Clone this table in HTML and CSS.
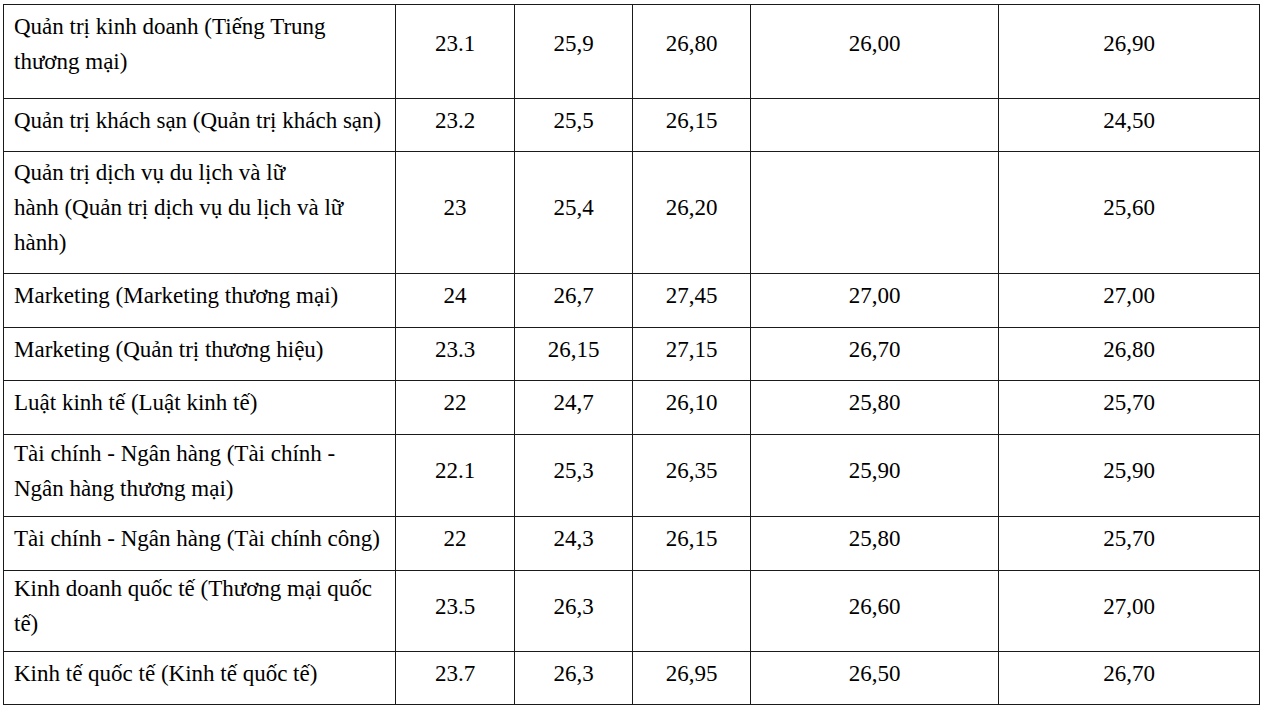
FILE: index.html
```html
<!DOCTYPE html>
<html lang="vi">
<head>
<meta charset="utf-8">
<title>Điểm chuẩn</title>
<link rel="stylesheet" href="styles.css">
</head>
<body>
<table class="scores">
  <colgroup>
    <col class="c-name">
    <col class="c-a">
    <col class="c-b">
    <col class="c-c">
    <col class="c-d">
    <col class="c-e">
  </colgroup>
  <tbody>
    <tr class="r-first">
      <td class="name">Quản trị kinh doanh (Tiếng Trung<br>thương mại)</td>
      <td>23.1</td><td>25,9</td><td class="gl">26,80</td><td class="gl">26,00</td><td class="gl">26,90</td>
    </tr>
    <tr class="h53">
      <td class="name">Quản trị khách sạn (Quản trị khách sạn)</td>
      <td>23.2</td><td>25,5</td><td class="gl">26,15</td><td class="gl"></td><td class="gl">24,50</td>
    </tr>
    <tr class="h122">
      <td class="name">Quản trị dịch vụ du lịch và lữ<br>hành (Quản trị dịch vụ du lịch và lữ<br>hành)</td>
      <td>23</td><td>25,4</td><td class="gl">26,20</td><td class="gl"></td><td class="gl">25,60</td>
    </tr>
    <tr class="h54">
      <td class="name">Marketing (Marketing thương mại)</td>
      <td>24</td><td>26,7</td><td class="gl">27,45</td><td class="gl">27,00</td><td class="gl">27,00</td>
    </tr>
    <tr class="h53">
      <td class="name">Marketing (Quản trị thương hiệu)</td>
      <td>23.3</td><td>26,15</td><td class="gl">27,15</td><td class="gl">26,70</td><td class="gl">26,80</td>
    </tr>
    <tr class="h54">
      <td class="name">Luật kinh tế (Luật kinh tế)</td>
      <td>22</td><td>24,7</td><td class="gl">26,10</td><td class="gl">25,80</td><td class="gl">25,70</td>
    </tr>
    <tr class="h82">
      <td class="name">Tài chính - Ngân hàng (Tài chính -<br>Ngân hàng thương mại)</td>
      <td>22.1</td><td>25,3</td><td class="gl">26,35</td><td class="gl">25,90</td><td class="gl">25,90</td>
    </tr>
    <tr class="h54">
      <td class="name">Tài chính - Ngân hàng (Tài chính công)</td>
      <td>22</td><td>24,3</td><td class="gl">26,15</td><td class="gl">25,80</td><td class="gl">25,70</td>
    </tr>
    <tr class="h81">
      <td class="name">Kinh doanh quốc tế (Thương mại quốc<br>tế)</td>
      <td>23.5</td><td>26,3</td><td class="gl"></td><td class="gl">26,60</td><td class="gl">27,00</td>
    </tr>
    <tr class="h53">
      <td class="name">Kinh tế quốc tế (Kinh tế quốc tế)</td>
      <td>23.7</td><td>26,3</td><td class="gl">26,95</td><td class="gl">26,50</td><td class="gl">26,70</td>
    </tr>
  </tbody>
</table>
</body>
</html>
```
FILE: styles.css
```css
html, body {
  margin: 0;
  padding: 0;
  background: #ffffff;
}

body {
  padding: 4px 0 0 3px;
  font-family: "Liberation Serif", "Times New Roman", serif;
  font-size: 23px;
  color: #000000;
}

.scores {
  border-collapse: collapse;
  table-layout: fixed;
  width: 1256px;
}

.c-name { width: 392px; }
.c-a { width: 119px; }
.c-b { width: 118px; }
.c-c { width: 118px; }
.c-d { width: 248px; }
.c-e { width: 261px; }

.scores td {
  border: 1px solid #1a1a1a;
  padding: 0 2px 10px 2px;
  line-height: 35px;
  text-align: center;
  vertical-align: middle;
  overflow: hidden;
}

.scores td.gl {
  border-left: 1px solid #5a5a5a;
}

.scores td.name {
  text-align: left;
  padding-left: 10px;
  padding-right: 4px;
}

.r-first { height: 94px; }
.r-first td { padding-bottom: 16px; }
.h53 { height: 53px; }
.h54 { height: 54px; }
.h81 { height: 81px; }
.h82 { height: 82px; }
.h122 { height: 122px; }
```
